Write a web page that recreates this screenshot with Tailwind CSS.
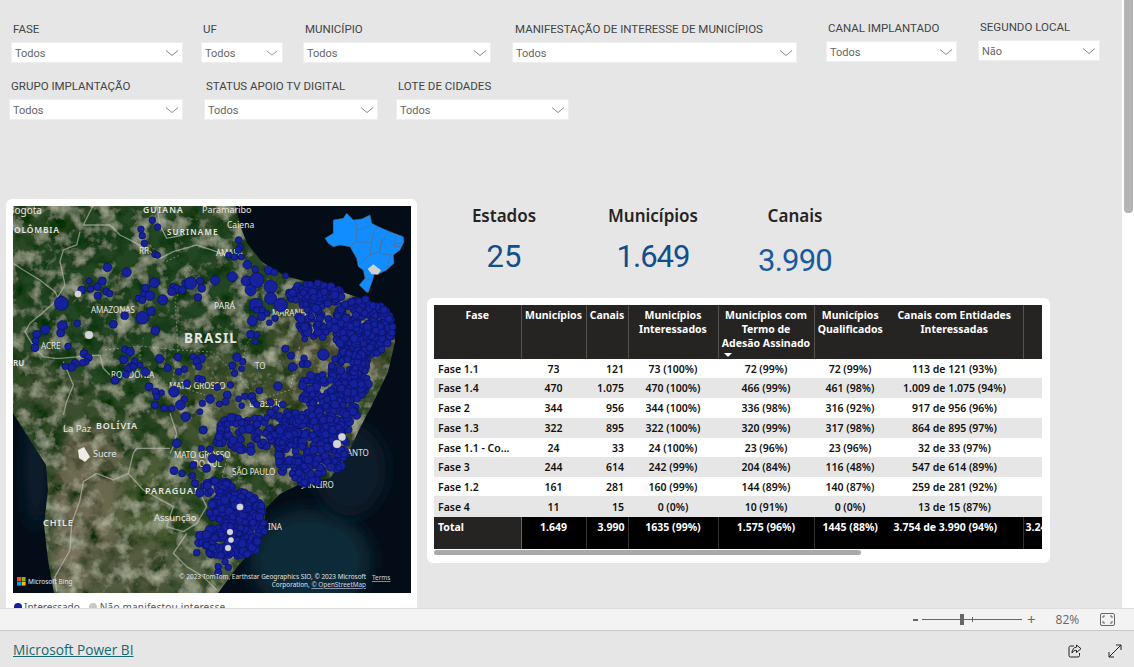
<!DOCTYPE html>
<html lang="pt-BR">
<head>
  <meta charset="UTF-8">
  <title>Microsoft Power BI</title>
  <script src="https://cdn.jsdelivr.net/npm/@tailwindcss/browser@4"></script>
</head>
<body class="h-screen overflow-hidden bg-[#e6e6e6] font-['Noto_Sans',sans-serif]">
  <div class="flex h-[608px] overflow-hidden">
    <div class="w-[1122px] shrink-0">

      <!-- filtros -->
      <div class="flex items-start pl-[11px] pt-[19px] font-['Roboto',sans-serif]">
        <div class="w-[172px]">
          <div class="h-[20px] pl-[2px] text-[11.5px] leading-[20px] text-[#444]">FASE</div>
          <div class="mt-[3px] flex h-[21px] items-center justify-between border border-[#eee] bg-white pl-[3px] pr-[2px] text-[11px] text-[#666]"><span class="pt-[3px]">Todos</span>
            <svg class="w-[14px] h-[6px] mr-[1px]" viewBox="0 0 14 6" fill="none" stroke="#888"><path d="M1 .5 7 5.500 13 .5"/></svg></div>
        </div>
        <div class="ml-[18px] w-[82px]">
          <div class="h-[20px] pl-[2px] text-[11.5px] leading-[20px] text-[#444]">UF</div>
          <div class="mt-[3px] flex h-[21px] items-center justify-between border border-[#eee] bg-white pl-[3px] pr-[2px] text-[11px] text-[#666]"><span class="pt-[3px]">Todos</span>
            <svg class="w-[12px] h-[6px] mr-[2px]" viewBox="0 0 14 6" fill="none" stroke="#888"><path d="M1 .5 7 5.500 13 .5"/></svg></div>
        </div>
        <div class="ml-[20px] w-[188px]">
          <div class="h-[20px] pl-[2px] text-[11.5px] leading-[20px] text-[#444]">MUNICÍPIO</div>
          <div class="mt-[3px] flex h-[21px] items-center justify-between border border-[#eee] bg-white pl-[3px] pr-[2px] text-[11px] text-[#666]"><span class="pt-[3px]">Todos</span>
            <svg class="w-[14px] h-[6px] mr-[1px]" viewBox="0 0 14 6" fill="none" stroke="#888"><path d="M1 .5 7 5.500 13 .5"/></svg></div>
        </div>
        <div class="ml-[21px] w-[285px]">
          <div class="h-[20px] pl-[3px] text-[11.5px] leading-[20px] text-[#444] whitespace-nowrap">MANIFESTAÇÃO DE INTERESSE DE MUNICÍPIOS</div>
          <div class="mt-[3px] flex h-[21px] items-center justify-between border border-[#eee] bg-white pl-[3px] pr-[2px] text-[11px] text-[#666]"><span class="pt-[3px]">Todos</span>
            <svg class="w-[14px] h-[6px] mr-[1px]" viewBox="0 0 14 6" fill="none" stroke="#888"><path d="M1 .5 7 5.500 13 .5"/></svg></div>
        </div>
        <div class="ml-[29px] -mt-px w-[131px]">
          <div class="h-[20px] pl-[2px] text-[11.5px] leading-[20px] text-[#444]">CANAL IMPLANTADO</div>
          <div class="mt-[3px] flex h-[21px] items-center justify-between border border-[#eee] bg-white pl-[3px] pr-[2px] text-[11px] text-[#666]"><span class="pt-[3px]">Todos</span>
            <svg class="w-[14px] h-[6px] mr-[1px]" viewBox="0 0 14 6" fill="none" stroke="#888"><path d="M1 .5 7 5.500 13 .5"/></svg></div>
        </div>
        <div class="ml-[21px] -mt-[2px] w-[122px]">
          <div class="h-[20px] pl-[2px] text-[11.5px] leading-[20px] text-[#444]">SEGUNDO LOCAL</div>
          <div class="mt-[3px] flex h-[21px] items-center justify-between border border-[#eee] bg-white pl-[3px] pr-[2px] text-[11px] text-[#666]"><span class="pt-[3px]">Não</span>
            <svg class="w-[14px] h-[6px] mr-[1px]" viewBox="0 0 14 6" fill="none" stroke="#888"><path d="M1 .5 7 5.500 13 .5"/></svg></div>
        </div>
      </div>

      <div class="mt-[13px] flex items-start pl-[9px] font-['Roboto',sans-serif]">
        <div class="w-[174px]">
          <div class="h-[20px] pl-[2px] text-[11.5px] leading-[20px] text-[#444]">GRUPO IMPLANTAÇÃO</div>
          <div class="mt-[3px] flex h-[21px] items-center justify-between border border-[#eee] bg-white pl-[3px] pr-[2px] text-[11px] text-[#666]"><span class="pt-[3px]">Todos</span>
            <svg class="w-[14px] h-[6px] mr-[1px]" viewBox="0 0 14 6" fill="none" stroke="#888"><path d="M1 .5 7 5.500 13 .5"/></svg></div>
        </div>
        <div class="ml-[21px] w-[174px]">
          <div class="h-[20px] pl-[2px] text-[11.5px] leading-[20px] text-[#444]">STATUS APOIO TV DIGITAL</div>
          <div class="mt-[3px] flex h-[21px] items-center justify-between border border-[#eee] bg-white pl-[3px] pr-[2px] text-[11px] text-[#666]"><span class="pt-[3px]">Todos</span>
            <svg class="w-[14px] h-[6px] mr-[1px]" viewBox="0 0 14 6" fill="none" stroke="#888"><path d="M1 .5 7 5.500 13 .5"/></svg></div>
        </div>
        <div class="ml-[18px] w-[173px]">
          <div class="h-[20px] pl-[2px] text-[11.5px] leading-[20px] text-[#444]">LOTE DE CIDADES</div>
          <div class="mt-[3px] flex h-[21px] items-center justify-between border border-[#eee] bg-white pl-[3px] pr-[2px] text-[11px] text-[#666]"><span class="pt-[3px]">Todos</span>
            <svg class="w-[14px] h-[6px] mr-[1px]" viewBox="0 0 14 6" fill="none" stroke="#888"><path d="M1 .5 7 5.500 13 .5"/></svg></div>
        </div>
      </div>

      <div class="mt-[79px] flex items-start pl-[6px]">
        <!-- mapa -->
        <div class="h-[430px] w-[411px] shrink-0 rounded-[6px] bg-white pl-[7px] pt-[7px]">
          <svg id="mapa" class="block h-[387px] w-[398px]" viewBox="13 206 398 387" font-family="'Noto Sans',sans-serif">
            <defs>
              <filter id="terreno" x="0" y="0" width="100%" height="100%">
                <feTurbulence type="fractalNoise" baseFrequency="0.06" numOctaves="5" seed="7" result="n"/>
                <feColorMatrix in="n" type="matrix" values="0 0 0 0 0  0 0 0 0 .03  0 0 0 0 0  2.400 0 0 0 -1" result="sombra"/>
                <feColorMatrix in="n" type="matrix" values="0 0 0 0 .55  0 0 0 0 .58  0 0 0 0 .42  0 1.600 0 0 -.78" result="claro"/>
                <feMerge result="mistura"><feMergeNode in="SourceGraphic"/><feMergeNode in="sombra"/><feMergeNode in="claro"/></feMerge>
              </filter>
              <filter id="borra" x="-60%" y="-60%" width="220%" height="220%"><feGaussianBlur stdDeviation="9"/></filter>
              <filter id="leve"><feGaussianBlur stdDeviation=".3"/></filter>
              <clipPath id="terra"><path d="M13 206H236L240 225 247 243 262 262 285 276 320 285 345 293 372 302 392 322 395 342 388 372 372 405 358 432 346 458 330 478 300 484 280 494 266 508 263 532 252 550 238 566 224 585 218 593H54L48 560 44 525 48 490 46 465 30 440 13 413Z"/></clipPath>
              <clipPath id="mapa-clip"><rect x="13" y="206" width="398" height="387"/></clipPath>
            </defs>
            <g clip-path="url(#mapa-clip)">
              <rect x="13" y="206" width="398" height="387" fill="#040d17"/>
              <ellipse cx="310" cy="560" rx="60" ry="50" fill="#0e2a38" filter="url(#borra)"/>
              <ellipse cx="350" cy="470" rx="36" ry="46" fill="#0a1c2a" filter="url(#borra)"/>
              <ellipse cx="36" cy="470" rx="10" ry="60" fill="#0c2433" filter="url(#borra)"/>
              <g clip-path="url(#terra)">
                <g filter="url(#terreno)">
                  <rect x="13" y="206" width="398" height="387" fill="#2f4a26"/>
                  <ellipse cx="140" cy="300" rx="130" ry="90" fill="#234422" filter="url(#borra)"/>
                  <ellipse cx="340" cy="340" rx="60" ry="55" fill="#55563a" filter="url(#borra)"/>
                  <ellipse cx="300" cy="430" rx="60" ry="50" fill="#4f5534" filter="url(#borra)"/>
                  <ellipse cx="220" cy="400" rx="50" ry="50" fill="#445430" filter="url(#borra)"/>
                  <ellipse cx="90" cy="500" rx="40" ry="80" fill="#6d6850" filter="url(#borra)"/>
                  <ellipse cx="78" cy="560" rx="26" ry="40" fill="#7c745e" filter="url(#borra)"/>
                  <ellipse cx="150" cy="510" rx="32" ry="60" fill="#4f6038" filter="url(#borra)"/>
                  <ellipse cx="130" cy="570" rx="50" ry="30" fill="#565c40" filter="url(#borra)"/>
                  <ellipse cx="200" cy="570" rx="30" ry="30" fill="#546244" filter="url(#borra)"/>
                  <ellipse cx="55" cy="395" rx="35" ry="22" fill="#445234" filter="url(#borra)"/>
                </g>
              </g>
              <!-- fronteiras -->
              <g fill="none" stroke="#c4c7ba" stroke-opacity=".6" stroke-width="4" stroke-linejoin="round" transform="translate(0 195) scale(.3333)">
                <path d="M40 205 70 225 120 255 165 290 180 320"/>
                <path d="M240 110 230 150 190 165 180 200 195 270 165 320 120 360 90 385 75 410 105 460 130 485 165 490 180 490 240 485 300 480 310 520 330 540"/>
                <path d="M280 30 250 90 330 90 360 120 400 140 450 170 480 190 520 170 590 150 650 170 680 180"/>
                <path d="M470 30 480 90 500 130 550 120"/>
                <path d="M190 500 220 570 200 620 190 660"/>
              </g>
              <g fill="none" stroke="#c4c7ba" stroke-opacity=".6" stroke-width="4" stroke-linejoin="round" transform="translate(0 410) scale(.3333)">
                <path d="M510 10 530 70 520 110 510 130"/>
                <path d="M400 130 410 115 510 115"/>
                <path d="M400 130 385 190 340 210 290 190 250 215 240 270 215 340 210 420 165 500 170 545"/>
                <path d="M385 190 430 240 520 290 500 350 550 365 590 340 620 290 600 250"/>
                <path d="M560 370 520 430 560 470 610 500 650 540"/>
              </g>
              <g fill="none" stroke="#d8dac8" stroke-opacity=".55" stroke-width=".8" stroke-dasharray="2 2">
                <path d="M105 350 140 346 178 350 175 300 190 270"/>
                <path d="M178 350 212 352 240 378 246 345 260 325"/>
                <path d="M140 346 140 372"/>
                <path d="M178 350 172 384 205 395"/>
                <path d="M150 245 165 262 180 255"/>
                <path d="M240 378 258 400 290 390 300 345"/>
                <path d="M268 470 222 478 232 440"/>
              </g>
              <g fill="#e6e6e0" font-size="9">
                <text x="8" y="214" font-size="10">Bogota</text>
                <text x="143" y="213" font-size="8.500" font-weight="600" letter-spacing="1.200">GUIANA</text>
                <text x="202" y="213" font-size="9">Paramaribo</text>
                <text x="227" y="228" font-size="8.500">Caiena</text>
                <text x="14" y="233" font-size="8.500" font-weight="600" letter-spacing=".8">OLÔMBIA</text>
                <text x="167" y="235" font-size="8" font-weight="600" letter-spacing="1.200">SURINAME</text>
                <text x="139" y="254" font-size="8">RR</text>
                <text x="216" y="256" font-size="8">AMAPÁ</text>
                <text x="91" y="313" font-size="8">AMAZONAS</text>
                <text x="214" y="309" font-size="8.500">PARÁ</text>
                <text x="272" y="316" font-size="8">MARANHÃO</text>
                <text x="184" y="343" font-size="13.500" font-weight="700" letter-spacing="1.100">BRASIL</text>
                <text x="41" y="349" font-size="8">ACRE</text>
                <text x="13" y="366" font-size="8" font-weight="600">RU</text>
                <text x="255" y="369" font-size="8">TO</text>
                <text x="111" y="378" font-size="8">RONDÔNIA</text>
                <text x="169" y="389" font-size="8">MATO GROSSO</text>
                <text x="249" y="407" font-size="10">Brasília</text>
                <text x="63" y="432" font-size="9.500">La Paz</text>
                <text x="96" y="429" font-size="9" font-weight="600" letter-spacing=".8">BOLÍVIA</text>
                <text x="93" y="457" font-size="9">Sucre</text>
                <text x="174" y="458" font-size="8">MATO GROSSO</text>
                <text x="193" y="467" font-size="8">DO SUL</text>
                <text x="232" y="475" font-size="8">SÃO PAULO</text>
                <text x="347" y="456" font-size="8">ANTO</text>
                <text x="302" y="488" font-size="8">JANEIRO</text>
                <text x="145" y="494" font-size="9" font-weight="600" letter-spacing="1">PARAGUAI</text>
                <text x="154" y="521" font-size="9.500">Assunção</text>
                <text x="43" y="526" font-size="9" font-weight="600" letter-spacing="1">CHILE</text>
                <text x="268" y="530" font-size="8">INA</text>
              </g>
              <path d="M78 450 84 447 90 457 85 462 79 458Z" fill="#ecece6" filter="url(#leve)"/>
              <g id="pontos" filter="url(#leve)"></g>
              <!-- minimapa -->
              <g transform="translate(300 205) scale(.3333)">
                <path d="M75 100 100 85 100 45 130 40 140 25 160 45 185 42 210 30 215 55 235 65 270 80 310 95 312 110 300 135 280 150 282 175 260 195 240 205 222 208 218 225 205 262 200 262 178 240 195 220 190 195 175 185 170 160 150 125 120 120 100 125 85 115Z" fill="#118dff" stroke="#5f6a78" stroke-width="1.500" stroke-linejoin="round"/>
                <path d="M203 192 220 178 243 196 234 209 215 207Z" fill="#d0d0d0"/>
                <g fill="none" stroke="#5f6a78" stroke-width="2" stroke-linejoin="round">
                  <path d="M165 45 172 75 168 110 150 125"/>
                  <path d="M172 75 215 60"/>
                  <path d="M168 110 215 113 222 75 235 65"/>
                  <path d="M215 113 210 150 175 180"/>
                  <path d="M245 100 238 140 210 150"/>
                  <path d="M270 80 250 100 238 140"/>
                  <path d="M238 145 272 150 260 195"/>
                  <path d="M290 92 280 120 310 110"/>
                  <path d="M282 125 300 125"/>
                  <path d="M195 220 218 225"/>
                  <path d="M185 195 203 192"/>
                </g>
              </g>
              <!-- atribuição -->
              <g>
                <rect x="17" y="577" width="4" height="4" fill="#f25022"/><rect x="21.600" y="577" width="4" height="4" fill="#7fba00"/>
                <rect x="17" y="581.600" width="4" height="4" fill="#00a4ef"/><rect x="21.600" y="581.600" width="4" height="4" fill="#ffb900"/>
                <text x="28" y="584" font-size="6.500" fill="#e8e8e8">Microsoft Bing</text>
                <text x="366" y="579" font-size="6.400" fill="#e0e0e0" text-anchor="end">© 2023 TomTom, Earthstar Geographics SIO, © 2023 Microsoft</text>
                <text x="366" y="587" font-size="6.400" fill="#e0e0e0" text-anchor="end">Corporation, <tspan text-decoration="underline" fill="#c7d6f0">© OpenStreetMap</tspan></text>
                <text x="372" y="580" font-size="6.400" fill="#c7d6f0" text-decoration="underline">Terms</text>
              </g>
            </g>
          </svg>
          <div class="mt-[7px] flex items-center text-[10px] leading-[14px] text-[#555]">
            <span class="ml-[1px] mr-[2px] h-[8px] w-[8px] rounded-full bg-[#14209c]"></span>Interessado
            <span class="ml-[9px] mr-[3px] h-[8px] w-[8px] rounded-full bg-[#c8c8c8]"></span><span class="tracking-[.2px]">Não manifestou interesse</span>
          </div>
        </div>

        <div class="ml-[10px] w-[623px] shrink-0">
          <!-- indicadores -->
          <div class="flex h-[99px] text-center">
            <div class="w-[154px]">
              <div class="mt-[6px] text-[17px] font-semibold leading-[22px] text-[#252423]">Estados</div>
              <div class="mt-[11px] font-['Roboto',sans-serif] text-[31px] leading-[38px] text-[#124e8a]">25</div>
            </div>
            <div class="w-[144px]">
              <div class="mt-[6px] text-[17px] font-semibold leading-[22px] text-[#252423]">Municípios</div>
              <div class="mt-[11px] font-['Roboto',sans-serif] text-[31px] leading-[38px] tracking-[-1px] text-[#124e8a]">1.649</div>
            </div>
            <div class="w-[140px]">
              <div class="mt-[6px] text-[17px] font-semibold leading-[22px] text-[#252423]">Canais</div>
              <div class="mt-[15px] font-['Roboto',sans-serif] text-[31px] leading-[38px] tracking-[-.8px] text-[#1a5a9c]">3.990</div>
            </div>
          </div>

          <!-- tabela -->
          <div class="h-[265px] rounded-[6px] bg-white pl-[7px] pt-[7px]">
            <div class="w-[608px] overflow-hidden">
              <table class="w-[608px] table-fixed border-collapse text-[10.5px] font-semibold leading-[14px] text-[#111]">
                <colgroup>
                  <col class="w-[87px]"><col class="w-[65px]"><col class="w-[42px]"><col class="w-[90px]"><col class="w-[96px]"><col class="w-[72px]"><col class="w-[137px]"><col class="w-[19px]">
                </colgroup>
                <thead>
                  <tr class="h-[54px] bg-[#252423] align-top font-bold text-white">
                    <th class="border-r border-[#55534f] pt-[3px] text-center">Fase</th>
                    <th class="border-r border-[#55534f] pt-[3px] text-center">Municípios</th>
                    <th class="border-r border-[#55534f] pt-[3px] text-center">Canais</th>
                    <th class="border-r border-[#55534f] pt-[3px] text-center">Municípios Interessados</th>
                    <th class="relative border-r border-[#55534f] pt-[3px] text-center">Municípios com<br>Termo de<br>Adesão Assinado
                      <span class="absolute bottom-[2px] left-[5px] h-0 w-0 border-x-[4px] border-t-[4px] border-x-transparent border-t-white"></span></th>
                    <th class="pt-[3px] text-center">Municípios Qualificados</th>
                    <th class="border-r border-[#55534f] pt-[3px] text-center">Canais com Entidades Interessadas</th>
                    <th></th>
                  </tr>
                </thead>
                <tbody class="text-center">
                  <tr class="h-[19px] bg-white"><td class="pl-[4px] text-left">Fase 1.1</td><td>73</td><td class="pr-[4px] text-right">121</td><td>73 (100%)</td><td>72 (99%)</td><td>72 (99%)</td><td>113 de 121 (93%)</td><td></td></tr>
                  <tr class="h-[20px] bg-[#e6e6e6]"><td class="pl-[4px] text-left">Fase 1.4</td><td>470</td><td class="pr-[4px] text-right">1.075</td><td>470 (100%)</td><td>466 (99%)</td><td>461 (98%)</td><td>1.009 de 1.075 (94%)</td><td></td></tr>
                  <tr class="h-[20px] bg-white"><td class="pl-[4px] text-left">Fase 2</td><td>344</td><td class="pr-[4px] text-right">956</td><td>344 (100%)</td><td>336 (98%)</td><td>316 (92%)</td><td>917 de 956 (96%)</td><td></td></tr>
                  <tr class="h-[20px] bg-[#e6e6e6]"><td class="pl-[4px] text-left">Fase 1.3</td><td>322</td><td class="pr-[4px] text-right">895</td><td>322 (100%)</td><td>320 (99%)</td><td>317 (98%)</td><td>864 de 895 (97%)</td><td></td></tr>
                  <tr class="h-[19px] bg-white"><td class="whitespace-nowrap pl-[4px] text-left">Fase 1.1 - Co...</td><td>24</td><td class="pr-[4px] text-right">33</td><td>24 (100%)</td><td>23 (96%)</td><td>23 (96%)</td><td>32 de 33 (97%)</td><td></td></tr>
                  <tr class="h-[20px] bg-[#e6e6e6]"><td class="pl-[4px] text-left">Fase 3</td><td>244</td><td class="pr-[4px] text-right">614</td><td>242 (99%)</td><td>204 (84%)</td><td>116 (48%)</td><td>547 de 614 (89%)</td><td></td></tr>
                  <tr class="h-[19px] bg-white"><td class="pl-[4px] text-left">Fase 1.2</td><td>161</td><td class="pr-[4px] text-right">281</td><td>160 (99%)</td><td>144 (89%)</td><td>140 (87%)</td><td>259 de 281 (92%)</td><td></td></tr>
                  <tr class="h-[21px] bg-[#e6e6e6]"><td class="pl-[4px] text-left">Fase 4</td><td>11</td><td class="pr-[4px] text-right">15</td><td>0 (0%)</td><td>10 (91%)</td><td>0 (0%)</td><td>13 de 15 (87%)</td><td></td></tr>
                </tbody>
                <tfoot>
                  <tr class="h-[32px] bg-black align-top font-bold text-white">
                    <td class="border-r border-[#666] bg-[#252423] pl-[4px] pt-[3px] text-left">Total</td>
                    <td class="border-r border-[#333] pt-[3px] text-center">1.649</td>
                    <td class="border-r border-[#333] pr-[3px] pt-[3px] text-right">3.990</td>
                    <td class="border-r border-[#333] pt-[3px] text-center">1635 (99%)</td>
                    <td class="border-r border-[#333] pt-[3px] text-center">1.575 (96%)</td>
                    <td class="whitespace-nowrap pt-[3px] text-center">1445 (88%)</td>
                    <td class="whitespace-nowrap border-r border-[#333] pr-[18px] pt-[3px] text-center">3.754 de 3.990 (94%)</td>
                    <td class="overflow-hidden whitespace-nowrap pl-[2px] pt-[3px]">3.245</td>
                  </tr>
                </tfoot>
              </table>
              <div class="mt-px h-[6px] w-[608px]"><div class="h-[5px] w-[427px] rounded-[3px] bg-[#a9a9a9]"></div></div>
            </div>
          </div>
        </div>
      </div>
    </div>

    <!-- barra de rolagem -->
    <div class="w-[12px] bg-white pl-[2px]"><div class="h-[213px] w-[9px] rounded-b-[4px] bg-[#b4b4b4]"></div></div>
  </div>

  <!-- barra de zoom -->
  <div class="flex h-[23px] items-center border-y border-t-[#dedede] border-b-[#c8c8c8] bg-[#f3f3f3] font-['Open_Sans',sans-serif] text-[#666]">
    <span class="ml-[913px] h-[2px] w-[5px] bg-[#666]"></span>
    <div class="relative ml-[4px] h-[1px] w-[100px] bg-[#666]">
      <span class="absolute -top-[5px] left-[38px] h-[11px] w-[4px] bg-[#666]"></span>
      <span class="absolute -top-[2px] left-[50px] h-[5px] w-[1px] bg-[#666]"></span>
    </div>
    <span class="ml-[5px] text-[15px] leading-none">+</span>
    <span class="ml-[20px] w-[28px] text-[12px]">82%</span>
    <svg class="ml-[16px] h-[13px] w-[15px]" viewBox="0 0 15 13" fill="none" stroke="#666"><rect x=".5" y=".5" width="14" height="12" rx="1.500"/><path d="M3 5V3H5M10 3H12V5M12 8V10H10M5 10H3V8"/></svg>
  </div>

  <!-- rodapé -->
  <div class="flex h-[36px] items-center bg-[#e6e6e6] pt-[3px]">
    <a class="ml-[13px] w-[120px] whitespace-nowrap font-['Open_Sans',sans-serif] text-[13.7px] text-[#17696f] underline">Microsoft Power BI</a>
    <svg class="ml-[935px] h-[14px] w-[14px]" viewBox="0 0 14 14" fill="none" stroke="#222"><path d="M6 2H2.500A1.500 1.500 0 0 0 1 3.500V11.500A1.500 1.500 0 0 0 2.500 13H10A1.500 1.500 0 0 0 11.500 11.500V9"/><path d="M8.500 1 13 4.700 8.500 8.500V6.300C6.500 6.300 5 7.200 4 9 4 6 5.500 3.300 8.500 3.100Z"/></svg>
    <svg class="ml-[26px] h-[14px] w-[14px]" viewBox="0 0 14 14" fill="none" stroke="#222"><path d="M1 13 13 1M8 1H13V6M1 8V13H6"/></svg>
  </div>

  <script>
    const ns = 'http://www.w3.org/2000/svg';
    const grupo = document.getElementById('pontos');
    function ponto(x, y, r, cor) {
      const c = document.createElementNS(ns, 'circle');
      c.setAttribute('cx', x); c.setAttribute('cy', y); c.setAttribute('r', r);
      c.setAttribute('fill', cor || '#14209c');
      c.setAttribute('stroke', cor ? '#bbb' : '#0a1160');
      c.setAttribute('stroke-width', cor ? '.3' : '.7');
      grupo.appendChild(c);
    }
    // pontos lidos do mapa (coordenadas do recorte superior, 3x)
    const norte = [[457,76,10],[473,96,10],[423,103,10],[427,122,10],[433,145,10],[465,178,10],[473,181,9],[716,135,10],[720,157,10],[716,165,10],[686,180,9],[703,186,10],[724,186,9],[742,209,13],[766,223,10],[322,217,13],[380,232,14],[806,226,13],[823,232,10],[857,242,9],[267,258,9],[307,258,12],[292,275,11],[272,282,10],[245,285,12],[319,290,11],[329,296,10],[293,302,11],[184,325,21],[463,263,15],[437,279,12],[430,298,10],[450,302,14],[416,310,10],[427,315,11],[488,314,15],[520,275,10],[530,282,12],[515,290,12],[547,285,12],[555,265,10],[572,265,18],[600,258,11],[605,280,12],[594,307,11],[645,256,14],[697,245,15],[738,258,15],[752,285,17],[770,255,22],[812,275,20],[812,310,18],[768,330,20],[842,330,20],[374,362,12],[427,368,19],[453,349,13],[340,388,12],[232,385,10],[187,392,15],[136,404,14],[110,418,12],[182,414,12],[107,437,10],[105,458,12],[204,454,10],[466,407,13],[752,418,12],[770,420,9],[766,440,9],[757,378,15],[770,345,10],[787,345,10],[801,355,9],[785,365,12],[825,370,10],[808,383,9],[913,415,10],[914,432,9],[941,424,10],[968,426,11],[856,461,11],[873,482,11],[970,479,17],[912,490,10],[908,507,11],[922,507,11],[878,516,13],[252,476,12],[265,488,12],[258,500,10],[225,505,12],[248,503,10],[215,517,12],[196,514,10],[374,463,10],[390,470,13],[371,494,12],[403,499,10],[392,512,10],[385,522,12],[378,538,11],[400,515,10],[420,510,9],[436,531,13],[345,556,12],[479,491,13],[534,486,11],[580,485,10],[604,490,13],[590,500,12],[596,515,10],[503,519,11],[553,523,10],[536,530,10],[697,512,11],[711,487,13],[728,500,10],[725,521,9],[704,535,10],[595,551,11],[607,554,10],[561,565,11],[447,575,12],[652,577,10],[691,570,10],[522,590,16],[467,590,11],[485,593,9],[470,605,10],[778,587,10],[834,574,13],[682,600,12],[734,604,10],[716,612,9],[756,605,12],[630,612,13],[553,613,10],[465,630,11],[541,630,15],[607,625,10],[677,620,11],[658,627,9],[812,622,11],[848,628,10],[492,640,10],[515,640,10],[600,650,9],[725,632,9],[760,618,9],[770,628,10]];
    norte.forEach(p => ponto(p[0] / 3, p[1] / 3 + 195, p[2] / 3));
    // recorte inferior
    const sul = [[557,20,14],[610,60,12],[530,100,13],[695,105,12],[522,182,12],[546,191,10],[577,197,10],[580,165,11],[620,175,12],[637,145,13],[660,145,10],[604,115,9],[630,118,10],[655,88,12],[688,82,10],[585,220,11],[600,248,13],[625,248,12],[1045,58,11],[1025,130,22],[655,470,10],[675,455,10],[685,472,10],[655,488,11],[590,428,10],[648,435,10]];
    sul.forEach(p => ponto(p[0] / 3, p[1] / 3 + 410, p[2] / 3));
    // manchas densas: cx, cy, rx, ry, quantidade
    let semente = 12345;
    const sorte = () => (semente = (semente * 16807) % 2147483647) / 2147483647;
    const manchas = [
      [315,295,28,12,80],[315,322,18,14,35],[362,328,31,29,230],[350,375,20,26,110],[318,392,18,18,45],
      [338,412,20,16,60],[310,447,37,37,230],[285,425,22,18,50],[243,435,32,20,60],[217,487,17,7,26],
      [236,510,27,18,120],[228,542,32,16,110],[258,530,7,14,16]
    ];
    manchas.forEach(m => {
      for (let i = 0; i < m[4]; i++) {
        const a = sorte() * 6.2832, d = Math.sqrt(sorte());
        ponto(m[0] + Math.cos(a) * d * m[2], m[1] + Math.sin(a) * d * m[3], 3 + sorte() * 1.3);
      }
    });
    // não manifestou interesse
    [[78,294,3.300],[89,335,4],[337,444,4],[342,437,3.700],[240,507,3.300],[230,532,3],[231,540,2.700],[228,548,3]].forEach(p => ponto(p[0], p[1], p[2], '#d6d6d6'));
  </script>
</body>
</html>
